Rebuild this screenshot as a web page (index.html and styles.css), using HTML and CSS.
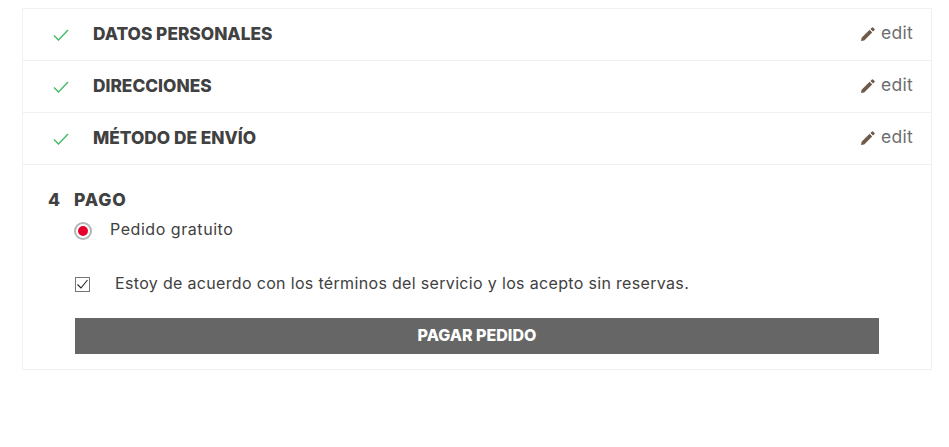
FILE: index.html
```html
<!DOCTYPE html>
<html lang="es">

<head>
  <meta charset="UTF-8">
  <title>Pago</title>
  <link rel="stylesheet" href="styles.css">
</head>

<body>
  <div class="steps">

    <div class="step">
      <svg class="tick" width="16" height="12" viewBox="0 0 16 12"><path d="M1 6.5 L5.5 11 L15 1"/></svg>
      <h2 class="stepTitle">DATOS PERSONALES</h2>
      <a class="edit" href="#">
        <svg class="pencil" width="14" height="14" viewBox="0 0 14 14"><path d="M0 14 L0.6 10.8 L8.6 2.8 L11.2 5.4 L3.2 13.4 Z M9.4 2 L11 0.4 Q11.5 0 12 0.4 L13.6 2 Q14 2.5 13.6 3 L12 4.6 Z"/></svg>
        edit
      </a>
    </div>

    <div class="step">
      <svg class="tick" width="16" height="12" viewBox="0 0 16 12"><path d="M1 6.5 L5.5 11 L15 1"/></svg>
      <h2 class="stepTitle">DIRECCIONES</h2>
      <a class="edit" href="#">
        <svg class="pencil" width="14" height="14" viewBox="0 0 14 14"><path d="M0 14 L0.6 10.8 L8.6 2.8 L11.2 5.4 L3.2 13.4 Z M9.4 2 L11 0.4 Q11.5 0 12 0.4 L13.6 2 Q14 2.5 13.6 3 L12 4.6 Z"/></svg>
        edit
      </a>
    </div>

    <div class="step">
      <svg class="tick" width="16" height="12" viewBox="0 0 16 12"><path d="M1 6.5 L5.5 11 L15 1"/></svg>
      <h2 class="stepTitle">MÉTODO DE ENVÍO</h2>
      <a class="edit" href="#">
        <svg class="pencil" width="14" height="14" viewBox="0 0 14 14"><path d="M0 14 L0.6 10.8 L8.6 2.8 L11.2 5.4 L3.2 13.4 Z M9.4 2 L11 0.4 Q11.5 0 12 0.4 L13.6 2 Q14 2.5 13.6 3 L12 4.6 Z"/></svg>
        edit
      </a>
    </div>

    <div class="payment">
      <h2 class="payTitle"><span class="payNum">4</span>PAGO</h2>

      <label class="radioRow">
        <span class="radio"></span>
        Pedido gratuito
      </label>

      <label class="termsRow">
        <svg class="checkbox" width="15" height="15" viewBox="0 0 15 15"><rect x="0.5" y="0.5" width="14" height="14"/><path d="M2.5 7.5 L6 11 L12.5 3"/></svg>
        Estoy de acuerdo con los términos del servicio y los acepto sin reservas.
      </label>

      <button class="payBtn">PAGAR PEDIDO</button>
    </div>

  </div>
</body>
</html>
```

FILE: styles.css
```css
body {
  margin: 0;
  font-family: "Inter", "Liberation Sans", sans-serif;
  color: #414141;
  background: #fff;
}

.steps {
  margin: 8px 17px 0 22px;
  border: 1px solid #f1f1f1;
}

.step {
  display: flex;
  align-items: center;
  height: 51px;
  padding: 0 18px 0 30px;
  border-bottom: 1px solid #f1f1f1;
}

.tick {
  fill: none;
  stroke: #4cbb6c;
  stroke-width: 1.5;
  margin-right: 24px;
}

.stepTitle {
  flex: 1;
  margin: 0 0 2px;
  font-size: 17.3px;
  font-weight: 800;
}

.edit {
  display: flex;
  align-items: center;
  gap: 6px;
  margin-bottom: 4px;
  font-size: 17.5px;
  letter-spacing: 0.3px;
  color: #6d6d6d;
  text-decoration: none;
}

.pencil {
  fill: #6f5a4c;
  margin-top: 3px;
}

.payment {
  padding: 24px 52px 15px 25px;
}

.payTitle {
  display: flex;
  margin: 0;
  font-size: 17.5px;
  line-height: 22px;
  font-weight: 800;
  letter-spacing: 0.8px;
}

.payNum {
  width: 26px;
}

.radioRow {
  display: flex;
  align-items: center;
  margin: 7px 0 0 27px;
  font-size: 16px;
  letter-spacing: 0.55px;
  line-height: 22px;
  gap: 20px;
}

.radio {
  width: 10px;
  height: 10px;
  border-radius: 50%;
  background: #e4002b;
  border: 2px solid #fff;
  box-shadow: 0 0 0 2px #b5b5b5;
  margin: 4px 0 0 1px;
}

.termsRow {
  display: flex;
  align-items: center;
  gap: 25px;
  margin: 32px 0 0 27px;
  font-size: 16px;
  letter-spacing: 0.33px;
  line-height: 22px;
}

.checkbox {
  flex: none;
  fill: #fff;
  stroke: #767676;
  margin-top: 2px;
}

.checkbox path {
  fill: none;
  stroke: #222;
  stroke-width: 1.1;
}

.payBtn {
  display: block;
  width: 804px;
  height: 36px;
  margin: 24px 0 0 27px;
  padding: 0 0 2px;
  border: none;
  background: #666;
  color: #fff;
  font-family: inherit;
  font-size: 16px;
  font-weight: 800;
}
```
